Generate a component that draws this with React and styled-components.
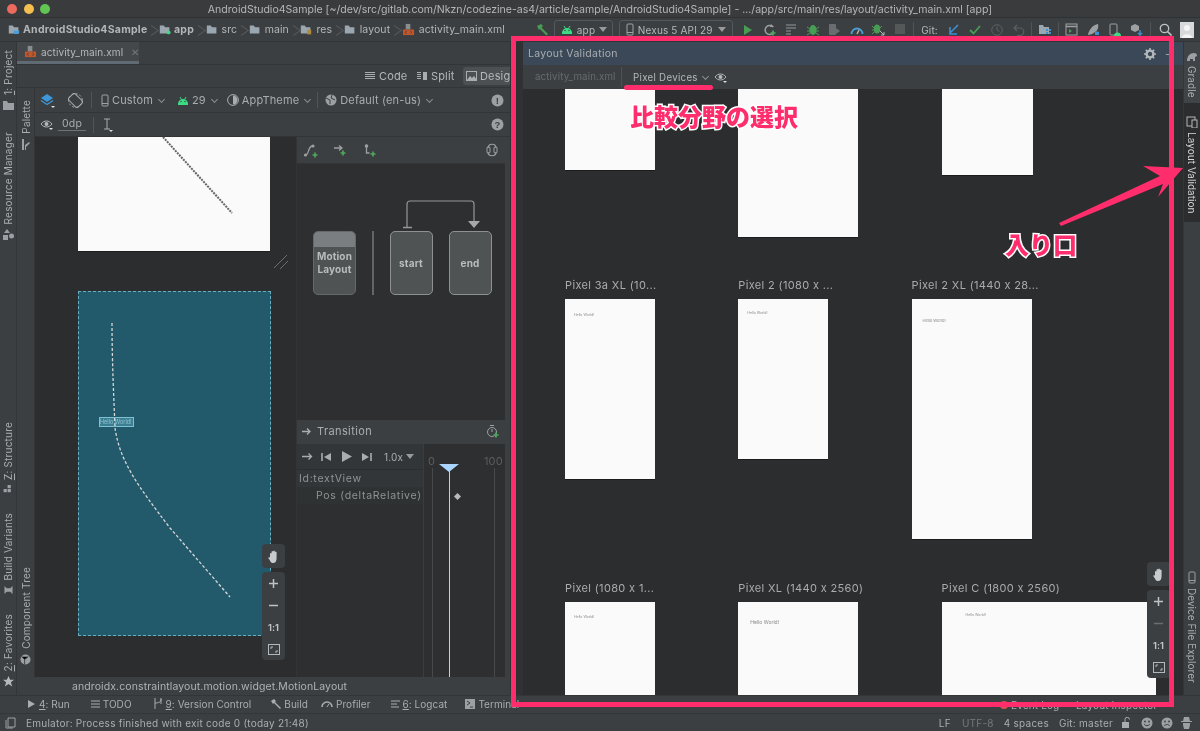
import React from "react";
import styled, { createGlobalStyle } from "styled-components";

const Global = createGlobalStyle`
  html, body { margin: 0; padding: 0; width: 1200px; height: 731px; overflow: hidden; background: #3c3f41; }
  #root { width: 1200px; height: 731px; }
  * { box-sizing: border-box; }
`;

const FONT = `Inter, "Noto Sans", "Liberation Sans", sans-serif`;

const Window = styled.div`
  position: relative; width: 1200px; height: 731px; display: flex; flex-direction: column;
  background: #3c3f41; color: #b4b8bb; font-family: ${FONT}; font-size: 10px; letter-spacing: .15px; overflow: hidden;
  filter: blur(.3px);
`;
const TitleBar = styled.div`
  height: 18px; flex: none; position: relative; display: flex; align-items: center; justify-content: center;
  background: #393b3d; border-bottom: 1px solid #2f3132; color: #b5b8ba; font-size: 10.55px; letter-spacing: 0; white-space: nowrap; padding-top: 2px;
`;
const Lights = styled.div`position: absolute; left: 7px; top: 4px; display: flex; gap: 6.5px;`;
const Light = styled.span`width: 10px; height: 10px; border-radius: 50%; background: ${p => p.$c};`;
const NavBar = styled.div`height: 24px; flex: none; display: flex; align-items: center; padding: 0 2px 0 8px; background: #3c3f41; border-bottom: 1px solid #323436;`;
const Crumb = styled.span`display: flex; align-items: center; gap: ${p => p.$b ? 3 : 4}px; font-size: 10.5px; font-weight: ${p => p.$b ? 700 : 400}; white-space: nowrap; color: #b2b6b9; letter-spacing: ${p => p.$b ? ".25px" : ".1px"};`;
const Chev = styled.span`width: 6px; height: 14px; margin: 0 2.75px; flex: none; display: block;
  &::before { content: ""; display: block; width: 8px; height: 8px; border-top: 1px solid #5a5d5f; border-right: 1px solid #5a5d5f; transform: translate(-3px, 3px) rotate(45deg) skew(-10deg,-10deg); }
`;
const Spacer = styled.div`flex: 1;`;
const DropBox = styled.div`height: 19px; width: ${p => p.$w}px; flex: none; border: 1px solid #56595b; border-radius: 3px; margin-right: ${p => p.$mr}px; display: flex; align-items: center; gap: 4px; padding-left: 6px; font-size: 10px; color: #b4b8bb; white-space: nowrap;`;
const Tri = styled.span`margin-left: auto; margin-right: 6px; width: 0; height: 0; border-left: 4px solid transparent; border-right: 4px solid transparent; border-top: 5px solid #999;`;
const TB = styled.span`width: 21.8px; height: 20px; flex: none; display: flex; align-items: center; justify-content: center;`;
const Sep = styled.span`width: 1px; height: 16px; flex: none; background: #515456; margin: ${p => p.$m || "0 3px"};`;
const GitLabel = styled.span`width: 21px; flex: none; font-size: 10px;`;

const Main = styled.div`flex: 1; min-height: 0; display: flex;`;
const Strip = styled.div`
  width: ${p => p.$w || 17}px; flex: none; display: flex; flex-direction: column; justify-content: space-between;
  align-items: center; padding: ${p => p.$pad || "8px 0"}; background: #3c3f41; border-right: 1px solid #333537;
`;
const RightStrip = styled(Strip)`border-right: 0; border-left: 1px solid #333537; padding: 0 0 12px;`;
const StripGroup = styled.div`display: flex; flex-direction: column; gap: ${p => p.$gap ?? 24}px; align-items: center;`;
const StripItem = styled.div`display: flex; flex-direction: column; align-items: center; gap: 5px;`;
const LeftLabel = styled.span`writing-mode: vertical-rl; transform: rotate(180deg); font-size: 10px; color: #a9adb0; white-space: nowrap; letter-spacing: .2px;`;
const Under = styled.span`text-decoration: underline;`;

const Editor = styled.div`width: 493px; flex: none; display: flex; flex-direction: column; background: #3c3f41;`;
const TabRow = styled.div`height: 23px; flex: none; display: flex; background: #3c3f41; border-bottom: 1px solid #323436;`;
const FileTab = styled.div`width: 122px; display: flex; align-items: center; gap: 4px; padding-left: 7px; border-bottom: 3px solid #5f6a72; background: #45484a; font-size: 10px; letter-spacing: .1px; color: #b4b8bb;`;
const Close = styled.span`margin-left: 4px; color: #777; font-size: 10px;`;
const ModeRow = styled.div`height: 23px; flex: none; display: flex; align-items: center; padding-left: 345px; background: #3c3f41; border-bottom: 1px solid #323436;`;
const Mode = styled.div`height: 18px; display: flex; align-items: center; gap: 3px; padding: 0 0 0 3px; flex: none; margin-left: ${p => p.$ml || 0}px; border-radius: 3px 0 0 3px; background: ${p => p.$on ? "#4c5052" : "transparent"}; font-size: 11px; color: #b4b8bb; width: ${p => p.$w}px; white-space: nowrap;`;
const Surface = styled.div`flex: 1; min-height: 0; display: flex; flex-direction: column;`;
const SurfaceTop = styled.div`flex: 1; min-height: 0; display: flex;`;
const SurfaceBody = styled.div`flex: 1; min-width: 0; display: flex; flex-direction: column;`;
const Tools = styled.div`height: ${p => p.$h}px; flex: none; display: flex; align-items: center; padding: 0 6px 0 5px; background: #3c3f41; border-bottom: 1px solid #323436;`;
const ToolText = styled.span`display: flex; align-items: center; gap: 3px; font-size: 11px; white-space: nowrap; color: #a9adb0; margin-left: ${p => p.$ml || 0}px;`;
const SmallChev = styled.span`width: 5px; height: 5px; display: inline-block; border-right: 1px solid #8a8d8f; border-bottom: 1px solid #8a8d8f; transform: translateY(-1px) rotate(45deg); margin-left: ${p => p.$ml || 3}px;`;
const DpBox = styled.span`width: 28px; height: 13px; margin-left: 5px; border-bottom: 1px solid #707375; font-size: 10.5px; line-height: 11px; text-align: center; color: #a9adb0;`;
const Body = styled.div`flex: 1; min-height: 0; display: flex;`;
const Canvas = styled.div`position: relative; width: 262px; flex: none; background: #2b2d2e; padding-left: 43px; overflow: hidden; border-right: 1px solid #323436;`;
const PhoneA = styled.div`width: 192px; height: 114px; background: #fafafa; box-shadow: 0 1px 0 #1d1e1f; `;
const PhoneB = styled.div`position: relative; width: 193px; height: 345px; margin-top: 40px; background: #225a6c; border: 1px dashed #6aaec0;`;
const Chip = styled.span`position: absolute; left: 20px; top: 125px; width: 35px; height: 10px; background: #3d7f92; border: 1px solid #7ec0d2; color: #8cc2d1; font-size: 5.5px; line-height: 8px; white-space: nowrap; overflow: hidden; letter-spacing: 0;`;
const MotionPath = styled.svg`position: relative; display: block;`;
const Grip = styled.svg`position: absolute; left: 238px; top: 117px;`;
const Float = styled.div`
  position: absolute; left: ${p => p.$x}px; top: ${p => p.$y}px; width: 23px; display: flex; flex-direction: column; align-items: center;
  background: #3c3f41; border-radius: 4px;
`;
const FloatBtn = styled.span`height: ${p => p.$h || 22}px; display: flex; align-items: center; justify-content: center; color: ${p => p.$dim ? "#6b6e70" : "#bfc2c4"}; font-size: 9px; font-weight: 700;`;

const Nav = styled.div`flex: 1; min-width: 0; display: flex; flex-direction: column; background: #2d2f30;`;
const NavTools = styled.div`height: 27px; flex: none; display: flex; align-items: center; padding: 0 7px 0 6px; gap: 7px; background: #3c3f41; border-bottom: 1px solid #323436;`;
const Graph = styled.div`height: 256px; flex: none; padding: 36px 0 0 16px;`;
const Arc = styled.svg`display: block; margin-left: 90px; margin-bottom: 2px;`;
const Boxes = styled.div`display: flex; align-items: stretch;`;
const StateBox = styled.div`
  width: ${p => p.$w || 43}px; height: 64px; margin-right: ${p => p.$mr || 0}px; flex: none; border: 1.5px solid ${p => p.$plain ? "#66696b" : "#8e9193"}; border-radius: 5px; background: #4f5354;
  display: flex; flex-direction: column; align-items: center; justify-content: ${p => p.$plain ? "flex-start" : "center"}; font-size: 10px; font-weight: 700; color: #b9bcbe; line-height: 13px; text-align: center; overflow: hidden;
`;
const BoxHead = styled.span`align-self: stretch; height: 15px; flex: none; background: #7b7e80; margin-bottom: 3px;`;
const BoxDivider = styled.span`width: 1.5px; height: 64px; background: #636668; margin: 0 16px 0 16px; flex: none;`;
const TransHead = styled.div`height: 24px; flex: none; display: flex; align-items: center; padding: 0 6px 2px 5px; gap: 5px; background: #3c3f41; font-size: 11px; color: #a9adb0; letter-spacing: .4px;`;
const Timeline = styled.div`flex: 1; min-height: 0; display: flex;`;
const TimeLeft = styled.div`width: 126px; flex: none; display: flex; flex-direction: column;`;
const Transport = styled.div`height: 26px; display: flex; align-items: center; gap: 8px; padding-left: 5px; background: #333638; color: #a9adb0; font-size: 10px; border-bottom: 1px solid #2b2d2e;`;
const Rate = styled.span`margin-left: 3px;`;
const RateTri = styled(Tri)`margin: 0 0 0 -5px;`;
const TimeRow = styled.div`height: 17px; display: flex; align-items: center; padding-left: ${p => p.$in}px; background: ${p => p.$bg}; color: #8f9396; font-size: 10.5px; letter-spacing: .7px; white-space: nowrap;`;
const TimeRight = styled.div`position: relative; flex: 1; background: #2d2f30; border-left: 1px solid #3a3c3e;`;
const Tick = styled.span`position: absolute; left: ${p => p.$x}px; top: 11px; color: #5b5e60; font-size: 11px; line-height: 12px;`;
const VLine = styled.span`position: absolute; left: ${p => p.$x}px; top: 24px; bottom: 0; width: 1px; background: ${p => p.$c};`;
const Head = styled.span`position: absolute; left: 15px; top: 20px; width: 0; height: 0; border-left: 10px solid transparent; border-right: 10px solid transparent; border-top: 8px solid #a9d5ff;`;
const Diamond = styled.span`position: absolute; left: 31px; top: 50px; width: 5px; height: 5px; background: #b8bbbd; transform: rotate(45deg);`;
const ScrollEdge = styled.div`width: 5px; flex: none; background: #3c3f41;`;
const PathBar = styled.div`height: 18px; flex: none; padding-left: 55px; display: flex; align-items: center; background: #3c3f41; color: #aeb2b5; font-size: 10.5px; letter-spacing: .1px; white-space: nowrap;`;
const Gutter = styled.div`width: 13px; flex: none; background: #2f3132;`;

const Panel = styled.div`flex: 1; min-width: 0; display: flex; flex-direction: column; position: relative;`;
const PanelHead = styled.div`height: 23px; flex: none; display: flex; align-items: center; padding: 0 5px; background: #3a4857; font-size: 10.5px; color: #a9adb0; letter-spacing: .3px;`;
const HeadDash = styled.span`margin: 0 6px 0 9px;`;
const PanelTabs = styled.div`height: 24px; flex: none; display: flex; align-items: center; background: #3c3f41; padding-left: 12px; font-size: 9.7px; color: #b4b8bb;`;
const DimTab = styled.span`color: #686b6d; width: 87px; border-right: 1px solid #4e5153; line-height: 20px; flex: none;`;
const PixelTab = styled.span`margin-left: 11px; display: flex; align-items: center; gap: 3px; letter-spacing: .3px; margin-right: 6px;`;
const Grid = styled.div`flex: 1; min-height: 0; overflow: hidden; background: #2b2d2e; padding-left: 42px; display: flex; flex-direction: column;`;
const DeviceRow = styled.div`display: flex; gap: 83.3px; height: ${p => p.$h}px; flex: none;`;
const Device = styled.div`display: flex; flex-direction: column; flex: none; width: ${p => p.$w}px;`;
const DeviceLabel = styled.div`height: 21px; font-size: 11px; letter-spacing: .35px; color: #a9adb0; white-space: nowrap; line-height: 14px;`;
const Screen = styled.div`height: ${p => p.$h}px; background: #fafafa; box-shadow: 0 1px 0 #1a1b1c; padding: ${p => `${p.$py || 0}px 0 0 ${p.$px || 0}px`}; color: #888; font-size: ${p => p.$fs || 3.5}px; line-height: 1; letter-spacing: 0; white-space: nowrap;`;

const ToolBar = styled.div`height: 19px; flex: none; display: flex; align-items: center; position: relative; background: #3c3f41; border-top: 1px solid #333537; border-bottom: 1px solid #333537; font-size: 10px; color: #a9adb0; padding-bottom: 2px;`;
const ToolWin = styled.span`display: flex; align-items: center; gap: 3px; white-space: nowrap; margin-left: ${p => p.$ml}px; letter-spacing: .05px;`;
const ToolWinRight = styled.span`position: absolute; left: ${p => p.$x}px; top: 3px; display: flex; align-items: center; gap: 3px; white-space: nowrap;`;
const StatusBar = styled.div`height: 17px; flex: none; display: flex; align-items: center; padding-left: 5px; background: #3c3f41; font-size: 10px; color: #a9adb0; letter-spacing: .25px;`;
const StatusText = styled.span`margin-left: ${p => p.$ml || 0}px; white-space: nowrap; color: ${p => p.$dim ? "#76797b" : "#a9adb0"};`;
const Gap = styled.span`width: ${p => p.$w}px; flex: none;`;

const Frame = styled.div`position: absolute; left: 511px; top: 36px; width: 663px; height: 671px; border: 5.5px solid #ff2d6b; pointer-events: none;`;
const Underline = styled.div`position: absolute; left: 624px; top: 85px; width: 89px; height: 5px; border-radius: 3px; background: #ff2d6b;`;
const Note = styled.div`
  position: absolute; left: ${p => p.$x}px; top: ${p => p.$y}px; color: #ff2d6b; font-family: "Noto Sans CJK JP", sans-serif; font-weight: 900; font-size: ${p => p.$fs}px; line-height: 1; letter-spacing: 0;
  -webkit-text-stroke: 3px #fff; paint-order: stroke fill; white-space: nowrap;
`;
const Arrow = styled.svg`position: absolute; left: 1050px; top: 160px;`;

const RightLabel = styled.span`writing-mode: vertical-rl; font-size: 10px; letter-spacing: .05px; white-space: nowrap; color: ${p => p.$on ? "#d5d8da" : "#a9adb0"};`;
const RightBox = styled.div`display: flex; flex-direction: column; align-items: center; gap: 4px;`;
const GradleTab = styled(RightBox)`width: 17px; height: 61px; padding-top: 10px; background: #414446;`;
const ActiveBox = styled(RightBox)`width: 17px; height: 119px; flex: none; background: #2b2d2e; padding-top: 13px;`;

/* ---- icons ---- */
const S = ({ w = 12, h = 12, vb, children }) => <svg width={w} height={h} viewBox={vb || `0 0 ${w} ${h}`} style={{ display: "block", flex: "none" }}>{children}</svg>;
const Folder = ({ badge, c = "#9aa7b0" }) => (
  <S w={12} h={10.4} vb="0 0 15 13"><path d="M1 2h5l1.5 2H13v8H1z" fill={c} />{badge === "green" && <circle cx="12" cy="10.5" r="2.4" fill="#3ddc84" />}{badge === "cup" && <path d="M7 8h7v2.5a2 2 0 0 1-2 2H9a2 2 0 0 1-2-2z" fill="#4a9fd8" />}{badge === "res" && <rect x="9" y="7" width="5" height="6" fill="#b08a3e" />}</S>
);
const Xml = () => (
  <S w={13} h={13} vb="0 0 14 14"><path d="M4 1h5v6H4z" fill="#8a8d8f" /><rect x="1" y="7" width="12" height="6" fill="#c2562a" /><path d="M5 8.5L3.5 10 5 11.5M9 8.5l1.5 1.5L9 11.5" stroke="#3c3f41" fill="none" /></S>
);
const Droid = ({ c = "#3ddc84", w = 12 }) => (
  <S w={w} h={9} vb="0 0 12 9"><path d="M1 8a5 5 0 0 1 10 0z" fill={c} /><path d="M3 1l1.5 2.5M9 1L7.5 3.5" stroke={c} /><circle cx="4" cy="5.5" r=".7" fill="#3c3f41" /><circle cx="8" cy="5.5" r=".7" fill="#3c3f41" /><rect x="1" y="7.5" width="10" height="1.5" fill={c} /></S>
);
const Phone = ({ c = "#a0a4a6" }) => <S w={8} h={13}><rect x="1" y="1" width="6" height="11" rx="1" fill="none" stroke={c} /><path d="M1 9.5h6" stroke={c} /></S>;
const Bars = () => <S w={11} h={10}><path d="M0 1.5h10M0 3.5h10M0 5.5h10M0 7.5h10" stroke="#a9adb0" /></S>;
const Eye = ({ tri = true }) => <S w={13} h={11}><path d="M1 5c3-4 8-4 11 0-3 4-8 4-11 0z" fill="none" stroke="#b4b8bb" /><circle cx="6.5" cy="5" r="2" fill="#b4b8bb" />{tri && <path d="M9 9h4l-2 2z" fill="#ddd" />}</S>;
const Round = ({ t }) => <S w={13} h={13}><circle cx="6.5" cy="6.5" r="6" fill="#9da0a2" /><text x="6.5" y="10" fontSize="9.5" fontWeight="700" textAnchor="middle" fill="#3c3f41" fontFamily="Liberation Sans">{t}</text></S>;
const Gear = () => <S w={12} h={12}><circle cx="6" cy="6" r="3.4" fill="none" stroke="#b4b8bb" strokeWidth="2.4" /><path d="M6 0v2.5M6 9.5V12M0 6h2.5M9.5 6H12M1.8 1.8l1.8 1.8M8.4 8.4l1.8 1.8M1.8 10.2l1.8-1.8M8.4 3.6l1.8-1.8" stroke="#b4b8bb" strokeWidth="1.6" /></S>;
const Hand = () => <S w={14} h={15}><path d="M3 8V4.5a1 1 0 0 1 1.5 0V7V2.8a1 1 0 0 1 1.7 0V7V2.2a1 1 0 0 1 1.7 0V7V3.2a1 1 0 0 1 1.7 0V9c0 3-1 5-3.6 5S4 12.5 1.5 9.5c-.7-1 .6-1.8 1.5-1z" fill="#c9ccce" /></S>;
const Fit = () => <S w={12} h={11}><rect x=".5" y=".5" width="11" height="10" fill="none" stroke="#b4b8bb" /><path d="M3 5V3h2M9 6v2H7" stroke="#b4b8bb" fill="none" /></S>;
const Plus = () => <S w={11} h={11}><path d="M5.5 1v9M1 5.5h9" stroke="currentColor" strokeWidth="1.5" /></S>;
const Minus = () => <S w={11} h={11}><path d="M1 5.5h9" stroke="currentColor" strokeWidth="1.5" /></S>;
const Green = ({ x = 8, y = 9 }) => <path d={`M${x - 2.5} ${y}h5M${x} ${y - 2.5}v5`} stroke="#4da85c" strokeWidth="1.7" />;
const Smile = ({ up }) => <S w={12} h={12}><circle cx="6" cy="6" r="5.5" fill="#9da0a2" /><circle cx="4" cy="4.5" r=".9" fill="#3c3f41" /><circle cx="8" cy="4.5" r=".9" fill="#3c3f41" /><path d={up ? "M3.2 7.2c1.5 2 4 2 5.6 0" : "M3.2 9c1.5-2 4-2 5.6 0"} stroke="#3c3f41" fill="none" /></S>;
const Run = () => <S w={10} h={12}><path d="M1 1l8 5-8 5z" fill="#499c54" /></S>;

const Small = ({ children }) => <TB>{children}</TB>;

const G = "#9da0a2";

export default function App() {
  return (
    <Window>
      <Global />
      <TitleBar>
        <Lights><Light $c="#ed6a5e" /><Light $c="#f4bf4f" /><Light $c="#61c554" /></Lights>
        AndroidStudio4Sample [~/dev/src/gitlab.com/Nkzn/codezine-as4/article/sample/AndroidStudio4Sample] - .../app/src/main/res/layout/activity_main.xml [app]
      </TitleBar>
      <NavBar>
        <Crumb $b><Folder badge="cup" />AndroidStudio4Sample</Crumb><Chev />
        <Crumb $b><Folder badge="green" />app</Crumb><Chev />
        <Crumb><Folder />src</Crumb><Chev />
        <Crumb><Folder />main</Crumb><Chev />
        <Crumb><Folder badge="res" />res</Crumb><Chev />
        <Crumb><Folder />layout</Crumb><Chev />
        <Crumb><Xml />activity_main.xml</Crumb>
        <Spacer />
        <Small><S w={13} h={13}><path d="M1 3l4-2 2 2-1.5 1.5L12 11l-1.5 1.5L4 6 3 7z" fill="#499c54" /></S></Small>
        <DropBox $w={59} $mr={6}><Droid />app<Tri /></DropBox>
        <DropBox $w={114} $mr={4}><Phone /><span>Nexus 5 API 29</span><Tri /></DropBox>
        <Small><Run /></Small>
        <Small><S w={13} h={13}><path d="M10 4A4.5 4.5 0 1 0 10 10" stroke={G} fill="none" strokeWidth="1.5" /><path d="M8 1l3 3H7z" fill={G} /><Green x={10} y={10} /></S></Small>
        <Small><S w={13} h={13}><path d="M1 2h10M1 5h10M1 8h5M1 11h5" stroke="#777a7c" strokeWidth="1.3" /></S></Small>
        <Small><S w={12} h={13}><ellipse cx="6" cy="7" rx="3.6" ry="5" fill="#499c54" /><path d="M0 4l3 2M12 4L9 6M0 8h3M12 8H9M0 12l3-2M12 12l-3-2" stroke="#499c54" /></S></Small>
        <Small><S w={13} h={13}><rect x="1" y="1" width="7" height="11" rx="1" fill="#6a6d6f" /><path d="M8 5l4 3-4 3z" fill="#6a6d6f" /></S></Small>
        <Small><S w={14} h={12}><path d="M1.5 10a5.5 5.5 0 0 1 11 0" stroke="#4a9fd8" strokeWidth="1.8" fill="none" /><path d="M7 10l2-4" stroke="#b4b8bb" strokeWidth="1.4" /></S></Small>
        <Small><S w={13} h={13}><ellipse cx="5" cy="6" rx="3.2" ry="4.5" fill="#499c54" /><path d="M0 3l2 2M10 3L8 5M0 7h2M0 11l2-2" stroke="#499c54" /><path d="M8 8l4 4m0-3v3H9" stroke="#b4b8bb" fill="none" /></S></Small>
        <Small><S w={11} h={11}><rect width="10" height="10" fill="#555859" /></S></Small>
        <Sep $m="0 7px 0 2px" />
        <GitLabel>Git:</GitLabel>
        <Small><S w={11} h={11}><path d="M10 1L2 9M2 3v7h7" stroke="#3d8fd1" strokeWidth="1.6" fill="none" /></S></Small>
        <Small><S w={12} h={10}><path d="M1 5l3.5 3.5L11 1" stroke="#499c54" strokeWidth="1.8" fill="none" /></S></Small>
        <Small><S w={12} h={12}><circle cx="6" cy="6" r="5.3" stroke="#5d6062" fill="none" /><path d="M6 2.5V6l2.5 1.5" stroke="#5d6062" fill="none" /></S></Small>
        <Small><S w={12} h={12}><path d="M4 1L1 4l3 3M1 4h6a3.7 3.7 0 0 1 0 7.5H4" stroke="#5d6062" fill="none" strokeWidth="1.2" /></S></Small>
        <Sep $m="0 2px" />
        <Small><S w={14} h={13}><path d="M1 2h4l1 2h5v7H1z" fill="#9aa7b0" /><rect x="8" y="6" width="2" height="2" fill="#3d8fd1" /><rect x="11" y="6" width="2" height="2" fill="#3d8fd1" /><rect x="8" y="9" width="2" height="2" fill="#3d8fd1" /><rect x="11" y="9" width="2" height="2" fill="#3d8fd1" /></S></Small>
        <Sep $m="0 1.5px" />
        <Small><S w={13} h={13}><rect x="1" y="1" width="11" height="11" fill="none" stroke={G} /><path d="M1 3.5h11" stroke={G} strokeWidth="1.5" /><path d="M4 6l3 2-3 2z" fill="#499c54" /></S></Small>
        <Small><S w={14} h={13}><path d="M2 12C3 6 7 2 12 1c1 4-1 7-3 8-2 2-5 3-7 3z" fill={G} /><path d="M9 8l4 1v3l-4 0z" fill="#3d8fd1" /></S></Small>
        <Small><S w={12} h={14}><rect x="1" y="1" width="7" height="11" rx="1" fill="none" stroke={G} /><path d="M5 13a3.5 3.5 0 0 1 7 0z" fill="#3ddc84" /></S></Small>
        <Small><S w={13} h={14}><path d="M5 1l4 2v4L5 9 1 7V3z" fill={G} /><path d="M10 7v5M8 10l2 2 2-2" stroke="#3d8fd1" strokeWidth="1.4" fill="none" /></S></Small>
        <Sep $m="0 3px" />
        <Small><S w={13} h={13}><circle cx="5.5" cy="5.5" r="4.2" stroke="#bfc2c4" strokeWidth="1.3" fill="none" /><path d="M8.5 8.5L12.5 12.5" stroke="#bfc2c4" strokeWidth="1.6" /></S></Small>
        <Small><S w={14} h={16}><rect width="14" height="16" fill="#d8d9da" /><circle cx="7" cy="6" r="3" fill="#f5f5f5" /><path d="M2 16c0-5 10-5 10 0z" fill="#f5f5f5" /></S></Small>
      </NavBar>

      <Main>
        <Strip>
          <StripGroup $gap={22}>
            <StripItem><LeftLabel><Under>1</Under>: Project</LeftLabel><S w={11} h={10}><path d="M0 1h4l1 2h6v7H0z" fill="#9aa0a3" /></S></StripItem>
            <StripItem><LeftLabel>Resource Manager</LeftLabel><S w={11} h={11}><path d="M4 0l3 4H1z" fill="#9aa0a3" /><circle cx="8.5" cy="7" r="2.5" fill="#9aa0a3" /><rect x="0" y="6" width="5" height="5" fill="#9aa0a3" /></S></StripItem>
          </StripGroup>
          <StripGroup $gap={20}>
            <StripItem><LeftLabel><Under>Z</Under>: Structure</LeftLabel><S w={10} h={8} vb="0 0 11 10"><rect x="5" width="4" height="4" fill="#9aa0a3" /><rect y="5" width="4" height="4" fill="#9aa0a3" /><rect x="5" y="5" width="4" height="4" fill="#9aa0a3" /></S></StripItem>
            <StripItem><LeftLabel>Build Variants</LeftLabel><S w={9} h={8} vb="0 0 11 11"><path d="M0 0l3 3h5l3-3v11l-3-3H3l-3 3z" fill="#9aa0a3" /></S></StripItem>
            <StripItem><LeftLabel><Under>2</Under>: Favorites</LeftLabel><S w={11} h={11} vb="0 0 12 12"><path d="M6 0l1.8 4H12L8.6 6.8 10 11.5 6 8.8 2 11.5 3.4 6.8 0 4h4.2z" fill="#b4b8bb" /></S></StripItem>
          </StripGroup>
        </Strip>
        <Editor>
          <TabRow>
            <FileTab><Xml />activity_main.xml<Close>✕</Close></FileTab>
          </TabRow>
          <ModeRow>
            <Mode $w={45}><Bars />Code</Mode>
            <Mode $w={45} $ml={7}><S w={11} h={10}><path d="M0 1.5h4M0 3.5h4M0 5.5h4M0 7.5h4" stroke="#a9adb0" /><rect x="6" y="1" width="4" height="8" fill="#a9adb0" /></S>Split</Mode>
            <Mode $w={47} $ml={4} $on><S w={11} h={10}><rect x=".5" y=".5" width="10" height="9" fill="none" stroke="#a9adb0" /><path d="M1 9l3-4 2 2 2-2 3 4z" fill="#a9adb0" /></S>Design</Mode>
          </ModeRow>
          <Surface>
            <SurfaceTop>
              <Strip $w={18} $pad="12px 0">
                <StripItem><LeftLabel>Palette</LeftLabel><S w={11} h={11}><path d="M2 0h2v11H2zM5 6l4-3 1 1-4 4v3H5z" fill="#9aa0a3" /></S></StripItem>
                <StripItem><LeftLabel>Component Tree</LeftLabel><S w={11} h={11} vb="0 0 12 12"><circle cx="6" cy="6" r="5.5" fill="#9aa0a3" /><path d="M2 3l3 3 4-3M5 6v5" stroke="#3c3f41" /></S></StripItem>
              </Strip>
              <SurfaceBody>
                <Tools $h={25}>
                  <S w={15} h={15}><path d="M7 1l6 4-6 4-6-4z" fill="#3d97d8" /><path d="M1 7.5l6 4 6-4" fill="none" stroke="#3d97d8" strokeWidth="1.4" /><path d="M11 13h4l-2 2z" fill="#ddd" /></S>
                  <Gap $w={13} />
                  <S w={15} h={15}><rect x="3" y="1" width="9" height="13" rx="2" transform="rotate(-45 7.5 7.5)" fill="none" stroke="#a9adb0" /><circle cx="7.5" cy="7.5" r="6.8" fill="none" stroke="#a9adb0" strokeDasharray="2 2" /></S>
                  <Sep $m="0 7px 0 8px" />
                  <ToolText $ml={2}><Phone />Custom<SmallChev /></ToolText>
                  <ToolText $ml={13}><Droid /><span>29</span><SmallChev /></ToolText>
                  <ToolText $ml={10}><S w={12} h={12}><circle cx="6" cy="6" r="5.4" fill="none" stroke="#a9adb0" /><path d="M6 1.5a4.5 4.5 0 0 1 0 9z" fill="#a9adb0" /></S>AppTheme<SmallChev /></ToolText>
                  <Sep $m="0 7px 0 7px" />
                  <ToolText><S w={12} h={12}><circle cx="6" cy="6" r="5.5" fill="#9da0a2" /><path d="M1 4l4 2v4M7 1L6 4l4 2" stroke="#3c3f41" fill="none" /></S>Default (en-us)<SmallChev /></ToolText>
                  <Spacer />
                  <Round t="!" />
                </Tools>
                <Tools $h={24}>
                  <Eye />
                  <DpBox>0dp</DpBox>
                  <Sep $m="0 7px 0 7px" />
                  <S w={12} h={14}><path d="M3 1h6M6 1v10M3 11h6" stroke="#a9adb0" fill="none" /><path d="M8 12h4l-2 2z" fill="#ddd" /></S>
                  <Spacer />
                  <Round t="?" />
                </Tools>
                <Body>
                  <Canvas>
                    <PhoneA>
                      <svg width="192" height="114" style={{ display: "block" }}><path d="M85 0L154 76" stroke="#666" strokeWidth="2" strokeDasharray="2 1" /></svg>
                    </PhoneA>
                    <PhoneB>
                      <Chip>Hello World!</Chip>
                      <MotionPath width="191" height="343"><path d="M33 31C33 70 35 110 36 136C41 170 59 194 91 236L151 305" stroke="#d5d8d9" strokeWidth="1.3" fill="none" strokeDasharray="3 2" /></MotionPath>
                    </PhoneB>
                    <Grip width="16" height="16"><path d="M1 14L14 1M7 15L15 7" stroke="#6b6e70" /></Grip>
                    <Float $x={227} $y={407}><FloatBtn $h={24}><Hand /></FloatBtn></Float>
                    <Float $x={227} $y={435}>
                      <FloatBtn><Plus /></FloatBtn>
                      <FloatBtn><Minus /></FloatBtn>
                      <FloatBtn>1:1</FloatBtn>
                      <FloatBtn><Fit /></FloatBtn>
                    </Float>
                  </Canvas>
                  <Nav>
                    <NavTools>
                      <S w={15} h={15}><path d="M2 12c5 0 2-9 8-9" stroke={G} fill="none" strokeWidth="1.3" /><circle cx="2.5" cy="12" r="1.6" fill={G} /><circle cx="10" cy="3" r="1.6" fill={G} /><Green x={12} y={12} /></S>
                      <Gap $w={1} />
                      <S w={15} h={13}><path d="M1 4h7M6 1.5L9 4 6 6.5" stroke={G} fill="none" strokeWidth="1.3" /><Green x={10} y={9} /></S>
                      <Gap $w={1} />
                      <S w={14} h={15}><circle cx="3.5" cy="3" r="1.8" fill={G} /><path d="M3.5 4v6h3" stroke={G} fill="none" strokeWidth="1.3" /><Green x={10} y={11} /></S>
                      <Spacer />
                      <S w={12} h={14}><path d="M2 5c0-5 8-5 8 0M2 9c0 5 8 5 8 0" stroke={G} fill="none" strokeWidth="1.2" /><rect x="1" y="4" width="3" height="6" rx="1" fill="none" stroke={G} /><rect x="8" y="4" width="3" height="6" rx="1" fill="none" stroke={G} /></S>
                    </NavTools>
                    <Graph>
                      <Arc width="80" height="29"><path d="M4 28V4a3 3 0 0 1 3-3h61a3 3 0 0 1 3 3v18" stroke="#95989a" strokeWidth="1.2" fill="none" /><path d="M0 27.5h9" stroke="#95989a" strokeWidth="1.5" /><path d="M65 21h12l-6 7z" fill="#a6a9ab" /></Arc>
                      <Boxes>
                        <StateBox $plain><BoxHead /><span>Motion<br />Layout</span></StateBox>
                        <BoxDivider />
                        <StateBox $mr={16}>start</StateBox>
                        <StateBox>end</StateBox>
                      </Boxes>
                    </Graph>
                    <TransHead>
                      <S w={10} h={9}><path d="M0 4.5h8M5 1.5l3 3-3 3" stroke="#a9adb0" fill="none" strokeWidth="1.3" /></S>
                      Transition
                      <Spacer />
                      <S w={13} h={14}><circle cx="6" cy="8" r="4.5" stroke={G} fill="none" /><path d="M4 1.5h4M6 5v3" stroke={G} /><Green x={10} y={11} /></S>
                    </TransHead>
                    <Timeline>
                      <TimeLeft>
                        <Transport>
                          <S w={11} h={9}><path d="M0 4.5h9M6.5 1.5l3 3-3 3" stroke="#a9adb0" fill="none" strokeWidth="1.3" /></S>
                          <S w={12} h={10}><path d="M1 1v8" stroke="#a9adb0" strokeWidth="1.6" /><path d="M10 1v8L3 5z" fill="#a9adb0" /></S>
                          <S w={12} h={13}><path d="M1 1l10 5.5L1 12z" fill="#a9adb0" /></S>
                          <S w={12} h={10}><path d="M10 1v8" stroke="#a9adb0" strokeWidth="1.6" /><path d="M1 1v8l7-4z" fill="#a9adb0" /></S>
                          <Rate>1.0x</Rate>
                          <RateTri />
                        </Transport>
                        <TimeRow $in={2} $bg="#333638">Id:textView</TimeRow>
                        <TimeRow $in={19} $bg="#2f3233">Pos (deltaRelative)</TimeRow>
                      </TimeLeft>
                      <TimeRight>
                        <Tick $x={4}>0</Tick>
                        <Tick $x={60}>100</Tick>
                        <VLine $x={8} $c="#464a4c" />
                        <VLine $x={70} $c="#464a4c" />
                        <VLine $x={25} $c="#a9d5ff" />
                        <Head />
                        <Diamond />
                      </TimeRight>
                    </Timeline>
                  </Nav>
                  <ScrollEdge />
                </Body>
              </SurfaceBody>
            </SurfaceTop>
            <PathBar>androidx.constraintlayout.motion.widget.MotionLayout</PathBar>
          </Surface>
        </Editor>
        <Gutter />
        <Panel>
          <PanelHead>
            Layout Validation
            <Spacer />
            <Gear />
            <HeadDash>−</HeadDash>
          </PanelHead>
          <PanelTabs>
            <DimTab>activity_main.xml</DimTab>
            <PixelTab>Pixel Devices <SmallChev $ml={2} /></PixelTab>
            <Eye />
          </PanelTabs>
          <Grid>
            <DeviceRow $h={189}>
              <Device $w={90}><Screen $h={81} /></Device>
              <Device $w={120}><Screen $h={148} /></Device>
              <Device $w={91}><Screen $h={86} /></Device>
            </DeviceRow>
            <DeviceRow $h={303}>
              <Device $w={90}><DeviceLabel>Pixel 3a XL (10...</DeviceLabel><Screen $h={180} $px={9} $py={15}>Hello World!</Screen></Device>
              <Device $w={90}><DeviceLabel>Pixel 2 (1080 x ...</DeviceLabel><Screen $h={160} $px={9} $py={13}>Hello World!</Screen></Device>
              <Device $w={120}><DeviceLabel>Pixel 2 XL (1440 x 28...</DeviceLabel><Screen $h={240} $px={11} $py={20} $fs={4}>Hello World!</Screen></Device>
            </DeviceRow>
            <DeviceRow $h={114}>
              <Device $w={90}><DeviceLabel>Pixel (1080 x 1...</DeviceLabel><Screen $h={93} $px={9} $py={14}>Hello World!</Screen></Device>
              <Device $w={120}><DeviceLabel>Pixel XL (1440 x 2560)</DeviceLabel><Screen $h={93} $px={12} $py={18} $fs={5}>Hello World!</Screen></Device>
              <Device $w={214}><DeviceLabel>Pixel C (1800 x 2560)</DeviceLabel><Screen $h={93} $px={24} $py={12}>Hello World!</Screen></Device>
            </DeviceRow>
          </Grid>
          <Float $x={624} $y={520}><FloatBtn $h={24}><Hand /></FloatBtn></Float>
          <Float $x={624} $y={548}>
            <FloatBtn><Plus /></FloatBtn>
            <FloatBtn $dim><Minus /></FloatBtn>
            <FloatBtn>1:1</FloatBtn>
            <FloatBtn><Fit /></FloatBtn>
          </Float>
        </Panel>
        <RightStrip>
          <StripGroup $gap={0}>
            <GradleTab><S w={12} h={10}><path d="M1 9c0-5 3-8 7-8 2 0 3 1 3 3l-2 1v4H7V7H4v2z" fill="#9aa0a3" /></S><RightLabel>Gradle</RightLabel></GradleTab>
            <ActiveBox><S w={12} h={12}><rect x="1" y="1" width="8" height="9" fill="none" stroke="#b4b8bb" /><rect x="6" y="4" width="5" height="8" fill="#2b2d2e" stroke="#b4b8bb" /></S><RightLabel $on>Layout Validation</RightLabel></ActiveBox>
          </StripGroup>
          <RightBox><Phone c="#9aa0a3" /><RightLabel>Device File Explorer</RightLabel></RightBox>
        </RightStrip>
      </Main>

      <ToolBar>
        <ToolWin $ml={27}><S w={9} h={10}><path d="M1 1l7 4-7 4z" fill="#a9adb0" /></S><span><Under>4</Under>: Run</span></ToolWin>
        <ToolWin $ml={21}><S w={9} h={8}><path d="M0 1h9M0 4h9M0 7h9" stroke="#a9adb0" /></S>TODO</ToolWin>
        <ToolWin $ml={21}><S w={10} h={11}><path d="M2 0v11M2 5c4 0 6-1 6-4M8 0v6" stroke="#a9adb0" fill="none" /></S><span><Under>9</Under>: Version Control</span></ToolWin>
        <ToolWin $ml={19}><S w={11} h={11}><path d="M1 3l3-2 2 2-1 1 6 6-1 1-6-6-1 1z" fill="#a9adb0" /></S>Build</ToolWin>
        <ToolWin $ml={13}><S w={12} h={9}><path d="M1 8a5 5 0 0 1 10 0" stroke="#a9adb0" strokeWidth="1.6" fill="none" /><path d="M6 8l2-3" stroke="#a9adb0" /></S>Profiler</ToolWin>
        <ToolWin $ml={20}><S w={9} h={8}><path d="M0 1h9M0 4h6M0 7h8" stroke="#a9adb0" strokeWidth="1.2" /></S><span><Under>6</Under>: Logcat</span></ToolWin>
        <ToolWin $ml={18}><S w={10} h={10}><rect width="10" height="10" fill="#9da0a2" /><path d="M2 2l3 2-3 2M5 8h3" stroke="#3c3f41" fill="none" /></S>Terminal</ToolWin>
        <ToolWinRight $x={1000}><S w={8} h={8}><circle cx="4" cy="4" r="4" fill="#d9534f" /></S>Event Log</ToolWinRight>
        <ToolWinRight $x={1076}>Layout Inspector</ToolWinRight>
      </ToolBar>
      <StatusBar>
        <S w={11} h={12}><path d="M3 1h7v9H3zM1 3v8h7" fill="none" stroke="#9da0a2" /></S>
        <StatusText $ml={10}>Emulator: Process finished with exit code 0 (today 21:48)</StatusText>
        <Spacer />
        <StatusText>LF</StatusText>
        <StatusText $ml={11} $dim>UTF-8</StatusText>
        <StatusText $ml={10}>4 spaces</StatusText>
        <StatusText $ml={10}>Git: master</StatusText>
        <Gap $w={9} />
        <S w={10} h={11}><rect x="0" y="5" width="7" height="6" fill="#a9adb0" /><path d="M3 5V2.5a2.2 2.2 0 0 1 4.4 0" stroke="#a9adb0" fill="none" /></S>
        <Gap $w={9} />
        <Smile up />
        <Gap $w={8} />
        <Smile />
        <Gap $w={8} />
        <S w={11} h={12}><path d="M3 0h5l1 4h2v1H0V4h2zM2 6h7v2l-1 4H3L2 8z" fill="#9da0a2" /></S>
        <Gap $w={8} />
      </StatusBar>

      <Frame />
      <Underline />
      <Note $x={630} $y={104} $fs={24}>比較分野の選択</Note>
      <Note $x={1005} $y={232} $fs={24}>入り口</Note>
      <Arrow width="140" height="75"><path d="M9 63L110 16 93 6 133 8 108 37 113 24 11 66z" fill="#ff2d6b" /></Arrow>
    </Window>
  );
}
